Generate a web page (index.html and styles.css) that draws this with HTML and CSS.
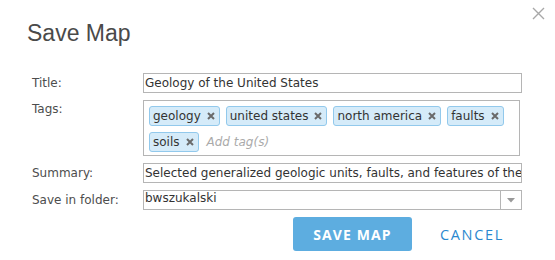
FILE: index.html
```html
<!DOCTYPE html>
<html>
<head>
<meta charset="utf-8">
<link rel="stylesheet" href="styles.css">
</head>
<body>
<div class="dialog">
  <button class="close" aria-label="Close">
    <svg width="13" height="13" viewBox="0 0 13 13"><path d="M1 1L12 12M12 1L1 12" stroke="#a8a8a8" stroke-width="1.4" fill="none"/></svg>
  </button>
  <h1 class="heading">Save Map</h1>
  <div class="form">
    <label class="label">Title:</label>
    <div class="input">Geology of the United States</div>

    <label class="label label-tags">Tags:</label>
    <div class="tags">
      <span class="chip">geology<svg class="x" viewBox="0 0 8 8"><path d="M1 1L7 7M7 1L1 7"/></svg></span>
      <span class="chip">united states<svg class="x" viewBox="0 0 8 8"><path d="M1 1L7 7M7 1L1 7"/></svg></span>
      <span class="chip">north america<svg class="x" viewBox="0 0 8 8"><path d="M1 1L7 7M7 1L1 7"/></svg></span>
      <span class="chip">faults<svg class="x" viewBox="0 0 8 8"><path d="M1 1L7 7M7 1L1 7"/></svg></span>
      <span class="chip">soils<svg class="x" viewBox="0 0 8 8"><path d="M1 1L7 7M7 1L1 7"/></svg></span>
      <span class="placeholder">Add tag(s)</span>
    </div>

    <label class="label">Summary:</label>
    <div class="input clip">Selected generalized geologic units, faults, and features of the United States</div>

    <label class="label">Save in folder:</label>
    <div class="select">
      <span class="select-text">bwszukalski</span>
      <span class="arrow"><svg width="8" height="5" viewBox="0 0 8 5"><path d="M0 0H8L4 4.5Z" fill="#999"/></svg></span>
    </div>
  </div>
  <div class="actions">
    <button class="btn-primary">SAVE MAP</button>
    <button class="btn-link">CANCEL</button>
  </div>
</div>
</body>
</html>
```

FILE: styles.css
```css
* { box-sizing: border-box; }
html, body { margin: 0; padding: 0; background: #fff; }
body { width: 555px; height: 260px; overflow: hidden; }

.dialog {
  position: relative;
  padding: 18px 33px 0 27px;
  font-family: "DejaVu Sans", Verdana, sans-serif;
  font-size: 12px;
  color: #333;
}

.close {
  position: absolute;
  top: 7px;
  left: 532px;
  border: 0;
  background: none;
  padding: 0;
  width: 13px;
  height: 13px;
  line-height: 0;
}

.heading {
  margin: 0 0 25px 0;
  font-family: "Liberation Sans", Arial, sans-serif;
  font-weight: normal;
  font-size: 23px;
  line-height: 30px;
  color: #4a4a4a;
}

.form {
  display: grid;
  grid-template-columns: 111px 379px;
  row-gap: 7px;
  padding-left: 5px;
  align-items: start;
}
.form > :nth-child(2) { margin-bottom: -1px; }

.label {
  color: #4d4d4d;
  line-height: 20px;
  height: 20px;
}
.label-tags { line-height: 18px; }

.input {
  height: 20px;
  border: 1px solid #b5b5b5;
  padding: 0 1px;
  line-height: 18px;
  white-space: nowrap;
  overflow: hidden;
}

.tags {
  border: 1px solid #b5b5b5;
  padding: 5px 3px 3px 5px;
  display: flex;
  flex-wrap: wrap;
  gap: 6px 6px;
  height: 56px;
  width: 377px;
}

.chip {
  display: inline-flex;
  align-items: center;
  height: 20px;
  border: 1px solid #92c9ec;
  background: #d5ebf9;
  border-radius: 3px;
  padding: 0 4px 0 3px;
  line-height: 18px;
  color: #333;
  gap: 6px;
}
.x {
  width: 8px;
  height: 8px;
  stroke: #6a6a6a;
  stroke-width: 2;
  fill: none;
}
.placeholder {
  font-style: italic;
  color: #aaa;
  line-height: 20px;
  margin-left: 2px;
}

.select {
  display: flex;
  height: 20px;
  border: 1px solid #b5b5b5;
}
.select-text {
  flex: 1;
  padding: 0 1px;
  line-height: 14px;
}
.arrow {
  width: 21px;
  border-left: 1px solid #b5b5b5;
  display: flex;
  align-items: center;
  justify-content: center;
}

.actions {
  display: flex;
  justify-content: flex-end;
  gap: 10px;
  margin-top: 7px;
}
.btn-primary {
  width: 119px;
  height: 34px;
  border: 0;
  border-radius: 3px;
  background: #5dade0;
  color: #fff;
  font-family: "Open Sans", sans-serif;
  font-weight: bold;
  font-size: 14px;
  letter-spacing: 1.1px;
  padding: 0;
}
.btn-link {
  width: 100px;
  height: 34px;
  border: 0;
  background: none;
  color: #2a88cf;
  font-family: "Open Sans", sans-serif;
  font-size: 14.5px;
  letter-spacing: 1.7px;
  padding: 0;
}
```
